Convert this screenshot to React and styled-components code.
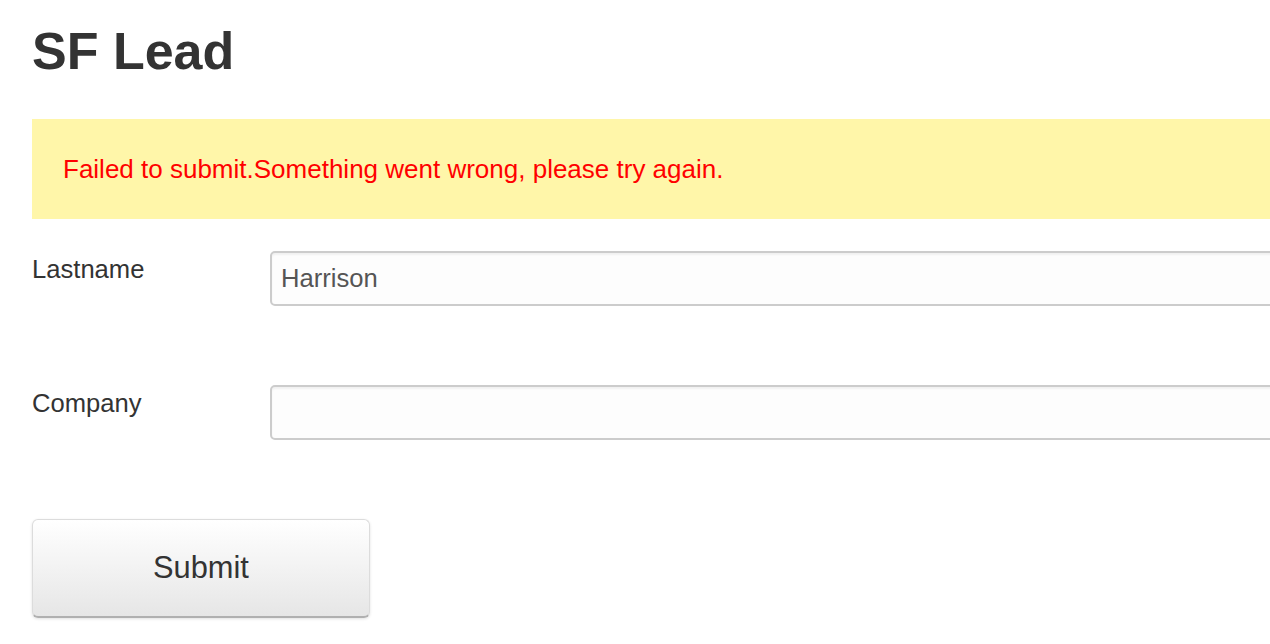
import React from "react";
import styled, { createGlobalStyle } from "styled-components";

const GlobalStyle = createGlobalStyle`
  html, body {
    margin: 0;
    padding: 0;
    background: #ffffff;
  }
  body {
    font-family: "Liberation Sans", Arial, sans-serif;
    color: #333333;
  }
`;

const Viewport = styled.div`
  width: 100vw;
  height: 100vh;
  overflow: hidden;
`;

const Page = styled.div`
  width: 1400px;
  padding: 0 0 0 32px;
  box-sizing: border-box;
`;

const Title = styled.h1`
  margin: 0;
  padding-top: 20px;
  font-size: 52px;
  line-height: 62px;
  font-weight: 700;
  color: #333333;
`;

const Alert = styled.div`
  margin-top: 37px;
  height: 100px;
  box-sizing: border-box;
  background: #fff6a9;
  color: #ff0000;
  font-size: 26px;
  line-height: 30px;
  padding: 35px 0 0 31px;
`;

const Form = styled.form`
  margin-top: 32px;
  display: flex;
  flex-direction: column;
  gap: 79px;
`;

const Row = styled.div`
  display: grid;
  grid-template-columns: 238px 1fr;
  align-items: start;
`;

const Label = styled.label`
  font-size: 25.6px;
  line-height: 30px;
  padding-top: 3px;
  color: #333333;
`;

const Input = styled.input`
  height: 55px;
  box-sizing: border-box;
  border: 2px solid #cccccc;
  border-radius: 5px;
  background: #fdfdfd;
  box-shadow: inset 0 2px 2px rgba(0, 0, 0, 0.05);
  font-family: "Liberation Sans", Arial, sans-serif;
  font-size: 25.6px;
  color: #555555;
  padding: 0 9px;
  outline: none;
`;

const Button = styled.button`
  width: 338px;
  height: 99px;
  box-sizing: border-box;
  border: 1px solid #dcdcdc;
  border-bottom: 2px solid #b0b0b0;
  border-radius: 6px;
  background: linear-gradient(to bottom, #ffffff 0%, #e6e6e6 100%);
  box-shadow: 0 1px 3px rgba(0, 0, 0, 0.12);
  font-family: "Liberation Sans", Arial, sans-serif;
  font-size: 30.8px;
  color: #333333;
  cursor: pointer;
  padding: 0;
`;

export default function App() {
  return (
    <Viewport>
      <GlobalStyle />
      <Page>
        <Title>SF Lead</Title>
        <Alert>Failed to submit.Something went wrong, please try again.</Alert>
        <Form onSubmit={(e) => e.preventDefault()}>
          <Row>
            <Label htmlFor="lastname">Lastname</Label>
            <Input id="lastname" defaultValue="Harrison" />
          </Row>
          <Row>
            <Label htmlFor="company">Company</Label>
            <Input id="company" defaultValue="" />
          </Row>
          <div>
            <Button type="submit">Submit</Button>
          </div>
        </Form>
      </Page>
    </Viewport>
  );
}
